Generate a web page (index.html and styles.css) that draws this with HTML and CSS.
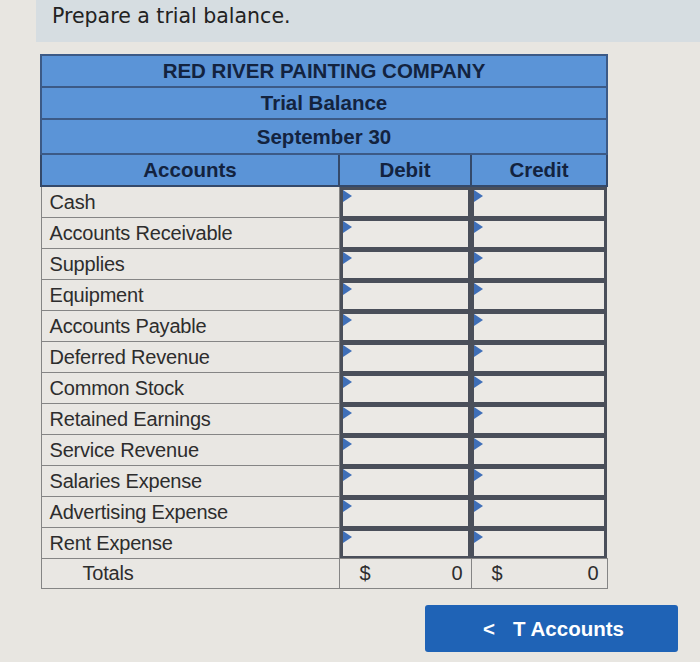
FILE: index.html
```html
<!DOCTYPE html>
<html>
<head>
<meta charset="utf-8">
<link rel="stylesheet" href="styles.css">
</head>
<body>
<div class="band">Prepare a trial balance.</div>
<div class="wrap">
<table class="tb">
  <colgroup><col class="c-acc"><col class="c-amt"><col class="c-amt2"></colgroup>
  <tr class="hd"><th colspan="3">RED RIVER PAINTING COMPANY</th></tr>
  <tr class="hd"><th colspan="3">Trial Balance</th></tr>
  <tr class="hd"><th colspan="3" class="tall">September 30</th></tr>
  <tr class="hd cols"><th>Accounts</th><th>Debit</th><th>Credit</th></tr>
  <tr><td class="acc">Cash</td><td class="in"><div class="box"></div></td><td class="in"><div class="box"></div></td></tr>
  <tr><td class="acc">Accounts Receivable</td><td class="in"><div class="box"></div></td><td class="in"><div class="box"></div></td></tr>
  <tr><td class="acc">Supplies</td><td class="in"><div class="box"></div></td><td class="in"><div class="box"></div></td></tr>
  <tr><td class="acc">Equipment</td><td class="in"><div class="box"></div></td><td class="in"><div class="box"></div></td></tr>
  <tr><td class="acc">Accounts Payable</td><td class="in"><div class="box"></div></td><td class="in"><div class="box"></div></td></tr>
  <tr><td class="acc">Deferred Revenue</td><td class="in"><div class="box"></div></td><td class="in"><div class="box"></div></td></tr>
  <tr><td class="acc">Common Stock</td><td class="in"><div class="box"></div></td><td class="in"><div class="box"></div></td></tr>
  <tr><td class="acc">Retained Earnings</td><td class="in"><div class="box"></div></td><td class="in"><div class="box"></div></td></tr>
  <tr><td class="acc">Service Revenue</td><td class="in"><div class="box"></div></td><td class="in"><div class="box"></div></td></tr>
  <tr><td class="acc">Salaries Expense</td><td class="in"><div class="box"></div></td><td class="in"><div class="box"></div></td></tr>
  <tr><td class="acc">Advertising Expense</td><td class="in"><div class="box"></div></td><td class="in"><div class="box"></div></td></tr>
  <tr><td class="acc">Rent Expense</td><td class="in"><div class="box"></div></td><td class="in"><div class="box"></div></td></tr>
  <tr class="tot"><td class="acc totl">Totals</td><td class="amt"><span>$</span><span>0</span></td><td class="amt"><span>$</span><span>0</span></td></tr>
</table>
</div>
<div class="actions">
  <button class="btn"><span class="chev">&lt;</span>T Accounts</button>
</div>
</body>
</html>
```
FILE: styles.css
```css
html, body {
  margin: 0;
  padding: 0;
}
body {
  width: 700px;
  height: 662px;
  background: #e8e6e1;
  font-family: "Liberation Sans", Arial, sans-serif;
  overflow: hidden;
}
.band {
  margin-left: 36px;
  height: 42px;
  background: #d6dde1;
  padding-left: 16px;
  box-sizing: border-box;
  font-family: "DejaVu Sans", Verdana, sans-serif;
  font-size: 20.5px;
  line-height: 32px;
  color: #222;
}
.wrap {
  padding: 12px 0 0 40px;
}
.tb {
  border-collapse: collapse;
  width: 566px;
  table-layout: fixed;
}
.c-acc { width: 298px; }
.c-amt { width: 132px; }
.c-amt2 { width: 136px; }
.hd th {
  background: #5b94d7;
  color: #13233f;
  font-weight: bold;
  font-size: 20.5px;
  height: 30px;
  padding: 0;
  border: 2px solid #3c5a86;
  text-align: center;
}
.hd th.tall { height: 33px; }
.cols th { border-color: #34496a; }
td {
  padding: 0;
  height: 30px;
}
td.acc {
  background: #e9e7e3;
  border: 1px solid #858585;
  color: #2d2d2d;
  font-size: 20px;
  letter-spacing: -0.2px;
  padding-left: 8px;
  white-space: nowrap;
}
td.in {
  background: #e9e7e3;
  padding: 0;
}
.box {
  position: relative;
  height: 25.7px;
  border: 3px solid #4a4f5a;
  border-bottom-width: 2px;
  background: #ebe9e5;
}
.box::before {
  content: "";
  position: absolute;
  left: 0;
  top: 0;
  border-left: 9px solid #3f6fb8;
  border-top: 6px solid transparent;
  border-bottom: 6px solid transparent;
}
.tot td { height: 29px; }
td.totl { padding-left: 41px; }
td.amt {
  background: #e9e7e3;
  border: 1px solid #858585;
  font-size: 20px;
  color: #2d2d2d;
}
td.amt span:first-child { float: left; padding-left: 20px; }
td.amt span:last-child { float: right; padding-right: 8px; }
.actions {
  display: flex;
  justify-content: flex-end;
  padding: 16px 22px 0 0;
}
.btn {
  width: 253px;
  height: 47px;
  background: #1f63b6;
  color: #fff;
  border: none;
  border-radius: 3px;
  font-family: "Liberation Sans", Arial, sans-serif;
  font-weight: bold;
  font-size: 20.5px;
  display: flex;
  align-items: center;
  justify-content: center;
  gap: 18px;
  padding-left: 10px;
}
.chev { font-weight: bold; }
```
